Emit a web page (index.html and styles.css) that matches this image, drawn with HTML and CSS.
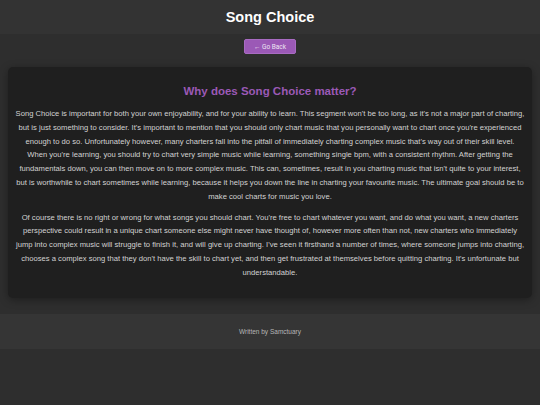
FILE: index.html
```html
<!doctype html>
<html>
  <head>
    <title>Song Choice</title>
    <link rel="stylesheet" href="styles.css">
  </head>

  <body>
    <header class="top">
      <h1>Song Choice</h1>
    </header>

    <main class="page">
      <a class="back-btn" href="#">&larr; Go Back</a>

      <div class="card">
        <h2>Why does Song Choice matter?</h2>
        <p>
          Song Choice is important for both your own enjoyability, and for your ability to learn. This segment won't be too long, as it's not a major part of charting, but is just something to consider. It's important to mention that you should only chart music that you personally want to chart once you're experienced enough to do so. Unfortunately however, many charters fall into the pitfall of immediately charting complex music that's way out of their skill level. When you're learning, you should try to chart very simple music while learning, something single bpm, with a consistent rhythm. After getting the fundamentals down, you can then move on to more complex music. This can, sometimes, result in you charting music that isn't quite to your interest, but is worthwhile to chart sometimes while learning, because it helps you down the line in charting your favourite music. The ultimate goal should be to make cool charts for music you love.
        </p>
        <p>
          Of course there is no right or wrong for what songs you should chart. You're free to chart whatever you want, and do what you want, a new charters perspective could result in a unique chart someone else might never have thought of, however more often than not, new charters who immediately jump into complex music will struggle to finish it, and will give up charting. I've seen it firsthand a number of times, where someone jumps into charting, chooses a complex song that they don't have the skill to chart yet, and then get frustrated at themselves before quitting charting. It's unfortunate but understandable.
        </p>
      </div>
    </main>

    <footer class="bottom">
      <span>Written by Samctuary</span>
    </footer>
  </body>
</html>
```

FILE: styles.css
```css
body {
  margin: 0;
  min-height: 100vh;
  background-color: #2e2e2e;
  font-family: "Liberation Sans", Arial, sans-serif;
  color: #d0d0d0;
}

.top {
  height: 34px;
  display: flex;
  justify-content: center;
  align-items: center;
  background-color: #333333;
}

.top h1 {
  margin: 0;
  font-size: 14.5px;
  font-weight: bold;
  color: #ffffff;
}

.page {
  display: flex;
  flex-direction: column;
  align-items: center;
  padding-top: 5px;
}

.back-btn {
  display: flex;
  align-items: center;
  justify-content: center;
  width: 52px;
  height: 15px;
  box-sizing: border-box;
  border-radius: 2px;
  border: 1px solid #a86bc2;
  background-color: #9b59b6;
  color: #eee4f3;
  font-family: Roboto, sans-serif;
  font-size: 6.5px;
  text-decoration: none;
}

.card {
  align-self: stretch;
  margin: 13px 8px 0;
  padding: 15px 7px 11px;
  background-color: #1f1f1f;
  border-radius: 5px;
  box-shadow: 0 2px 8px rgba(0, 0, 0, 0.35);
  text-align: center;
}

.card h2 {
  margin: 0 0 7px;
  font-size: 11.5px;
  line-height: 18px;
  color: #9b59b6;
}

.card p {
  margin: 0 0 7px;
  font-size: 7.65px;
  line-height: 13.8px;
  color: #d2d2d2;
}

.bottom {
  height: 35px;
  margin-top: 16px;
  display: flex;
  justify-content: center;
  align-items: center;
  background-color: #353535;
  color: #b5b5b5;
  font-size: 6.5px;
}
```
